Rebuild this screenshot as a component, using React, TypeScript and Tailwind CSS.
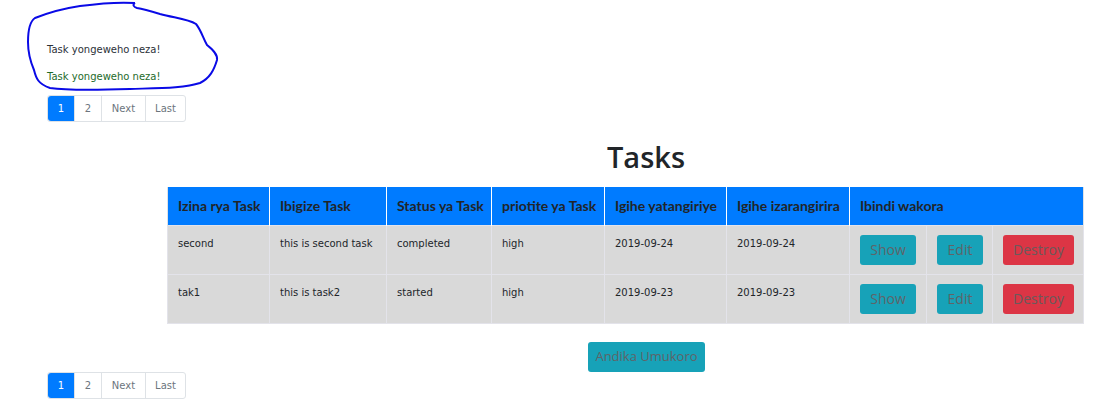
import React from "react";

const Pager = () => (
  <div className="flex w-fit rounded-[3px] border border-[#dee2e6] text-[10px] font-['DejaVu_Sans',sans-serif]">
    <span className="flex h-[25px] w-[26px] items-center justify-center rounded-l-[3px] bg-[#007bff] text-white">1</span>
    <span className="flex h-[25px] w-[27px] items-center justify-center border-l border-[#dee2e6] text-[#6c757d]">2</span>
    <span className="flex h-[25px] w-[44px] items-center justify-center border-l border-[#dee2e6] text-[#6c757d]">Next</span>
    <span className="flex h-[25px] w-[40px] items-center justify-center border-l border-[#dee2e6] text-[#6c757d]">Last</span>
  </div>
);

const rows = [
  ["second", "this is second task", "completed", "high", "2019-09-24", "2019-09-24"],
  ["tak1", "this is task2", "started", "high", "2019-09-23", "2019-09-23"],
];

const heads = ["Izina rya Task", "Ibigize Task", "Status ya Task", "priotite ya Task", "Igihe yatangiriye", "Igihe izarangirira"];
const widths = ["w-[102px]", "w-[117px]", "w-[105px]", "w-[113px]", "w-[122px]", "w-[123px]", "w-[77px]", "w-[66px]", "w-[91px]"];

export default function App() {
  return (
    <div className="relative min-h-[414px] w-[1114px] bg-white text-[#212529]">
      <svg className="pointer-events-none absolute left-0 top-0" width="230" height="100" viewBox="0 0 230 100">
        <path
          d="M135 3 C 120 2, 95 4, 80 6 C 60 9, 45 14, 35 18 C 29 22, 28 32, 28 42 C 28 55, 31 63, 34 70 C 36 78, 38 84, 50 88 C 70 91, 100 90, 130 89 C 160 88, 185 88, 200 83 C 210 78, 214 70, 217 60 C 218 54, 212 49, 207 45 C 203 38, 201 30, 196 24 C 188 19, 175 18, 160 14 C 150 11, 143 9, 137 8 C 134 7, 132 5, 135 3"
          fill="none"
          stroke="#0a0ae6"
          strokeWidth="2"
        />
      </svg>
      <div className="pl-[47px] pt-[43px] font-['DejaVu_Sans',sans-serif] text-[10px] leading-[13px]">
        <p className="text-[#2b3138]">Task yongeweho neza!</p>
        <p className="mt-[14px] text-[#1e6b2a]">Task yongeweho neza!</p>
      </div>
      <div className="ml-[47px] mt-[12px]">
        <Pager />
      </div>
      <h1 className="ml-[178px] mt-[15px] w-[936px] text-center font-['Open_Sans',sans-serif] text-[29px] font-semibold leading-[40px] text-[#212529]">
        Tasks
      </h1>
      <table className="ml-[167px] mt-[10px] w-[916px] table-fixed border-collapse">
        <colgroup>
          {widths.map((w, i) => (
            <col key={i} className={w} />
          ))}
        </colgroup>
        <thead>
          <tr className="h-[38px] bg-[#007bff]">
            {heads.map((h) => (
              <th key={h} className="whitespace-nowrap border-x border-white px-[10px] text-left font-['Lato',sans-serif] text-[14px] font-bold text-[#212529] first:border-l-[#dee2e6]">
                {h}
              </th>
            ))}
            <th colSpan={3} className="whitespace-nowrap border-x border-white border-r-[#dee2e6] px-[10px] text-left font-['Lato',sans-serif] text-[14px] font-bold text-[#212529]">
              Ibindi wakora
            </th>
          </tr>
        </thead>
        <tbody className="bg-[#d9d9d9]">
          {rows.map((r, ri) => (
            <tr key={ri} className="h-[49px]">
              {r.map((c, ci) => (
                <td key={ci} className="border border-[#e3e3ea] px-[10px] pt-[11px] align-top font-['DejaVu_Sans',sans-serif] text-[10px] leading-[14px] text-[#212529]">
                  {c}
                </td>
              ))}
              <td className="border border-[#e3e3ea] pl-[10px] align-middle">
                <span className="flex h-[30px] w-[56px] items-center justify-center rounded-[3px] bg-[#17a2b8] font-['Open_Sans',sans-serif] text-[14px] text-[#5f6468]">Show</span>
              </td>
              <td className="border border-[#e3e3ea] pl-[10px] align-middle">
                <span className="flex h-[30px] w-[46px] items-center justify-center rounded-[3px] bg-[#17a2b8] font-['Open_Sans',sans-serif] text-[14px] text-[#5f6468]">Edit</span>
              </td>
              <td className="border border-[#e3e3ea] pl-[10px] align-middle">
                <span className="flex h-[30px] w-[71px] items-center justify-center rounded-[3px] bg-[#dc3545] font-['Open_Sans',sans-serif] text-[14px] text-[#6a5a5c]">Destroy</span>
              </td>
            </tr>
          ))}
        </tbody>
      </table>
      <div className="ml-[588px] mt-[18px]">
        <span className="flex h-[30px] w-[117px] items-center justify-center rounded-[3px] bg-[#17a2b8] font-['Open_Sans',sans-serif] text-[13px] text-[#5f6468]">
          Andika Umukoro
        </span>
      </div>
      <div className="ml-[47px] mt-[0px]">
        <Pager />
      </div>
    </div>
  );
}
